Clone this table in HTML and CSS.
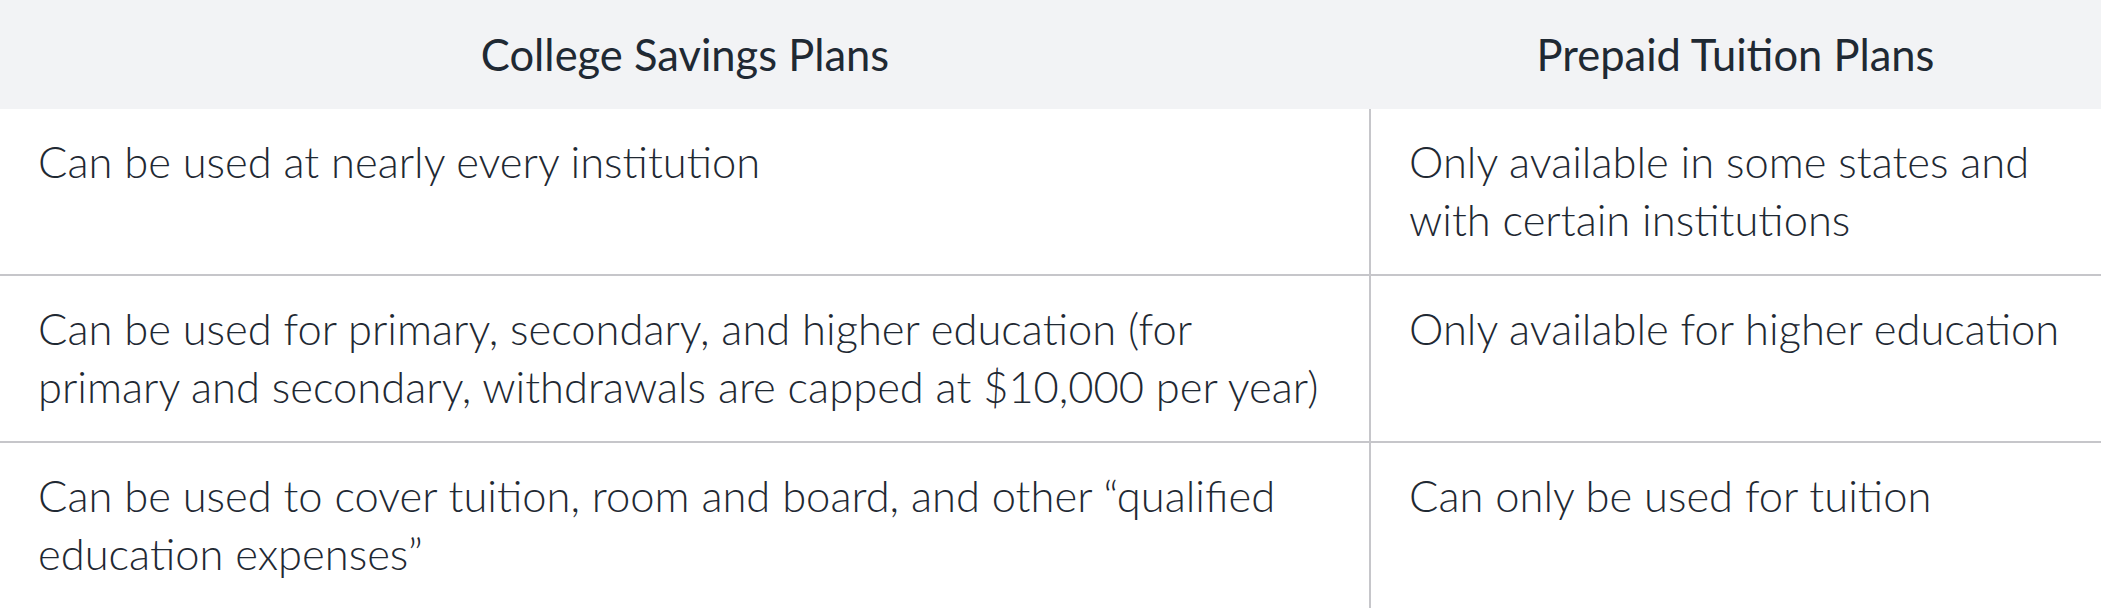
FILE: index.html
```html
<!DOCTYPE html>
<html lang="en">
<head>
<meta charset="utf-8">
<title>College Savings vs Prepaid Tuition Plans</title>
<link rel="stylesheet" href="styles.css">
</head>
<body>
<table class="compare">
  <colgroup>
    <col class="col-a">
    <col class="col-b">
  </colgroup>
  <thead>
    <tr>
      <th>College Savings Plans</th>
      <th>Prepaid Tuition Plans</th>
    </tr>
  </thead>
  <tbody>
    <tr>
      <td>Can be used at nearly every institution</td>
      <td>Only available in some states and with certain institutions</td>
    </tr>
    <tr>
      <td>Can be used for primary, secondary, and higher education (for primary and secondary, withdrawals are capped at $10,000 per year)</td>
      <td>Only available for higher education</td>
    </tr>
    <tr>
      <td>Can be used to cover tuition, room and board, and other “qualified education expenses”</td>
      <td>Can only be used for tuition</td>
    </tr>
  </tbody>
</table>
</body>
</html>
```

FILE: styles.css
```css
html, body {
  margin: 0;
  padding: 0;
  background: #ffffff;
}

body {
  font-family: "Lato", "Liberation Sans", sans-serif;
  color: #1f2933;
}

.compare {
  width: 2101px;
  border-collapse: collapse;
  table-layout: fixed;
}

.col-a {
  width: 1370px;
}

.compare th {
  background: #f2f3f5;
  font-weight: 400;
  font-size: 43.5px;
  line-height: 57px;
  padding: 26px 38px;
  text-align: center;
  color: #1f2933;
}

.compare td {
  font-weight: 300;
  font-size: 43.5px;
  line-height: 57.5px;
  padding: 24px 38px 26px 38px;
  vertical-align: top;
  text-align: left;
  border-top: 2px solid #c6c6ca;
}

.compare tbody tr:first-child td {
  border-top: none;
}

.compare td + td {
  border-left: 2px solid #c6c6ca;
}
```
